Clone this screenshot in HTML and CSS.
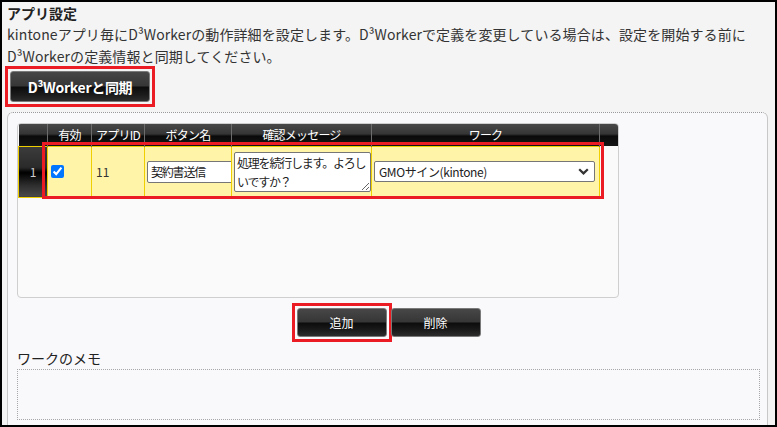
FILE: index.html
```html
<!DOCTYPE html>
<html lang="ja">
<head>
    <meta charset="UTF-8">
    <meta name="viewport" content="width=device-width, initial-scale=1.0">
    <title>アプリ設定</title>
    <link rel="stylesheet" href="styles.css">
</head>
<body>
    <div class="frame">
        <h2 class="section-title">アプリ設定</h2>
        <p class="lead">kintoneアプリ毎にD³Workerの動作詳細を設定します。D³Workerで定義を変更している場合は、設定を開始する前に<br>D³Workerの定義情報と同期してください。</p>
        <div class="sync-row">
            <button class="btn btn-sync marked">D³Workerと同期</button>
        </div>

        <div class="panel">
            <div class="grid-box">
                <table class="grid">
                    <colgroup>
                        <col style="width: 29px">
                        <col style="width: 44px">
                        <col style="width: 53px">
                        <col style="width: 87px">
                        <col style="width: 140px">
                        <col style="width: 228px">
                        <col style="width: 19px">
                    </colgroup>
                    <thead>
                        <tr>
                            <th></th>
                            <th>有効</th>
                            <th>アプリID</th>
                            <th>ボタン名</th>
                            <th>確認メッセージ</th>
                            <th>ワーク</th>
                            <th></th>
                        </tr>
                    </thead>
                    <tbody>
                        <tr class="row-active">
                            <td class="row-no">1</td>
                            <td><input type="checkbox" class="check" checked></td>
                            <td class="app-id">11</td>
                            <td><input type="text" class="field" value="契約書送信"></td>
                            <td><textarea class="message">処理を続行します。よろしいですか？</textarea></td>
                            <td>
                                <span class="select-wrap">
                                    <select class="work-select">
                                        <option>GMOサイン(kintone)</option>
                                    </select>
                                    <svg class="chevron" width="11" height="7" viewBox="0 0 11 7">
                                        <path d="M1.2 1.2 L5.5 5.4 L9.8 1.2" fill="none" stroke="#333" stroke-width="2.2"/>
                                    </svg>
                                </span>
                            </td>
                            <td class="blank"></td>
                        </tr>
                    </tbody>
                </table>
                <div class="row-mark"></div>
            </div>

            <div class="actions">
                <button class="btn btn-small marked">追加</button>
                <button class="btn btn-small">削除</button>
            </div>

            <h3 class="memo-title">ワークのメモ</h3>
            <div class="memo"></div>
        </div>
    </div>
</body>
</html>
```

FILE: styles.css
```css
:root {
    --text: #333;
    --mark: #ec1c24;
    --row: #fff4a8;
    --row-line: #f0cf00;
    --font: "Noto Sans CJK JP", "Noto Sans", sans-serif;
}
* {
    margin: 0;
    padding: 0;
    box-sizing: border-box;
}
body {
    font-family: var(--font);
    color: var(--text);
    background: #f4f4f4;
}
.frame {
    width: 777px;
    height: 427px;
    border: 2px solid #000;
    padding: 1px 7px 0 5px;
    display: flex;
    flex-direction: column;
    overflow: hidden;
    background: #f4f4f4;
}
.section-title {
    font-size: 14px;
    font-weight: bold;
    line-height: 20px;
    color: #222;
}
.lead {
    font-size: 14px;
    line-height: 22px;
    letter-spacing: 0.1px;
    white-space: nowrap;
}

/* dark glossy buttons */
.btn {
    position: relative;
    font-family: var(--font);
    color: #fff;
    border: 1px solid #7a7a7a;
    border-radius: 3px;
    background: linear-gradient(to bottom, #474747 0%, #363636 48%, #0c0c0c 52%, #1c1c1c 80%, #2c2c2c 100%);
    cursor: pointer;
}
/* square red highlight frame */
.marked::after {
    content: "";
    position: absolute;
    left: -6px;
    top: -6px;
    right: -6px;
    bottom: -6px;
    border: 3px solid var(--mark);
    pointer-events: none;
}
.sync-row {
    margin-top: 4px;
    padding-left: 3px;
}
.btn-sync {
    width: 140px;
    height: 31px;
    font-size: 14px;
    font-weight: bold;
    letter-spacing: -0.3px;
}
.btn-small {
    width: 90px;
    height: 29px;
    font-size: 12px;
}

/* settings panel */
.panel {
    flex: 1;
    margin-top: 10px;
    border-top: 1px dotted #9a9a9a;
    border-left: 1px solid #c8c8c8;
    border-right: 1px solid #c8c8c8;
    border-radius: 6px 6px 0 0;
    background: #f9f8fa;
    padding: 10px 7px 0 9px;
}
.grid-box {
    position: relative;
    width: 602px;
    height: 175px;
    border: 1px solid #cfcfcf;
    border-radius: 4px;
    background: #fafafa;
    overflow: hidden;
}
.grid {
    width: 600px;
    table-layout: fixed;
    border-collapse: collapse;
}
.grid th {
    height: 22px;
    font-size: 12px;
    font-weight: normal;
    letter-spacing: -0.8px;
    color: #fff;
    text-align: center;
    line-height: 20px;
    padding: 0;
    border-left: 1px solid #6c6c6c;
    background: linear-gradient(to bottom, #484848 0%, #353535 45%, #0a0a0a 55%, #151515 100%);
}
.grid th:first-child {
    border-left: none;
}
.row-active td {
    height: 51px;
    background: var(--row);
    border: 1px solid var(--row-line);
    padding: 0;
    font-size: 12px;
    vertical-align: middle;
}
.row-active td.row-no {
    color: #ccc;
    text-align: center;
    background: linear-gradient(to bottom, #3c3c3c 0%, #2a2a2a 42%, #000 52%, #2e2e2e 78%, #4a4a4a 100%);
}
.row-active td.blank {
    background: #fafafa;
    border: none;
}
.check {
    display: block;
    width: 13px;
    height: 13px;
    margin-left: 3px;
    accent-color: #0075ff;
}
.app-id {
    padding-left: 4px !important;
    color: #333;
}
.field {
    display: block;
    width: 89px;
    height: 22px;
    margin-left: 2px;
    padding: 0 3px;
    font-family: var(--font);
    font-size: 12px;
    letter-spacing: -1.2px;
    color: #222;
    border: 1px solid #767676;
    border-radius: 2px;
    background: #fff;
}
.message {
    display: block;
    width: 137px;
    height: 40px;
    margin-left: 2px;
    padding: 0 2px;
    font-family: var(--font);
    font-size: 12px;
    line-height: 19px;
    letter-spacing: -1.2px;
    color: #222;
    border: 1px solid #767676;
    border-radius: 2px;
    background: #fff;
    resize: both;
}
.select-wrap {
    position: relative;
    display: block;
    width: 221px;
    margin-left: 2px;
}
.work-select {
    display: block;
    width: 221px;
    height: 21px;
    padding: 0 4px;
    font-family: var(--font);
    font-size: 12px;
    letter-spacing: -0.4px;
    color: #222;
    border: 1px solid #767676;
    border-radius: 2px;
    background: #fff;
    appearance: none;
}
.chevron {
    position: absolute;
    right: 6px;
    top: 7px;
    pointer-events: none;
}
.row-mark {
    position: absolute;
    left: 24px;
    top: 18px;
    width: 562px;
    height: 57px;
    border: 3px solid var(--mark);
}

.actions {
    display: flex;
    justify-content: center;
    gap: 4px;
    margin-top: 10px;
}
.memo-title {
    font-size: 14px;
    font-weight: normal;
    line-height: 20px;
    color: #222;
    margin-top: 11px;
    margin-bottom: 1px;
}
.memo {
    height: 51px;
    border: 1px dotted #a8a8a8;
}
```
